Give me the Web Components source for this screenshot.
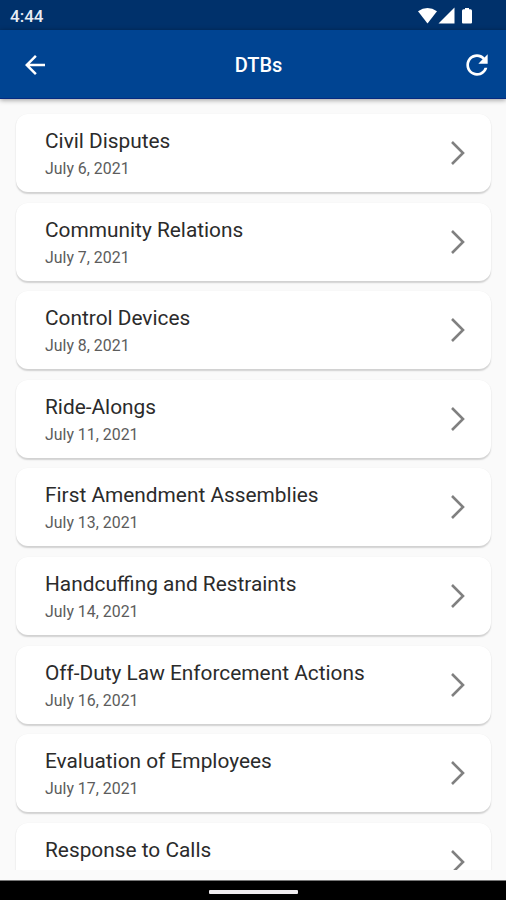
<!DOCTYPE html>
<html lang="en">
<head>
<meta charset="utf-8">
<title>DTBs</title>
<style>
    html, body {
        margin: 0;
        height: 100%;
        overflow: hidden;
        background: #fafafa;
    }
    body {
        font-family: Roboto, sans-serif;
    }
</style>
</head>
<body>
<phone-screen>
    <status-bar slot="top">4:44</status-bar>
    <app-bar slot="top">DTBs</app-bar>
    <bulletin-card date="July 6, 2021">Civil Disputes</bulletin-card>
    <bulletin-card date="July 7, 2021">Community Relations</bulletin-card>
    <bulletin-card date="July 8, 2021">Control Devices</bulletin-card>
    <bulletin-card date="July 11, 2021">Ride-Alongs</bulletin-card>
    <bulletin-card date="July 13, 2021">First Amendment Assemblies</bulletin-card>
    <bulletin-card date="July 14, 2021">Handcuffing and Restraints</bulletin-card>
    <bulletin-card date="July 16, 2021">Off-Duty Law Enforcement Actions</bulletin-card>
    <bulletin-card date="July 17, 2021">Evaluation of Employees</bulletin-card>
    <bulletin-card>Response to Calls</bulletin-card>
    <nav-bar slot="bottom"></nav-bar>
</phone-screen>
<script>
class PhoneScreen extends HTMLElement {
    constructor(){
        super();
        this.attachShadow({mode:"open"}).innerHTML = `
            <style>
                :host {
                    display: flex;
                    flex-direction: column;
                    width: 506px;
                    height: 900px;
                    overflow: hidden;
                    background: #fafafa;
                }
                #list {
                    flex: 1;
                    min-height: 0;
                    overflow: hidden;
                    display: flex;
                    flex-direction: column;
                    gap: 10.6px;
                    padding: 15px 15px 0 16px;
                    margin-bottom: 10px;
                }
            </style>
            <slot name="top"></slot>
            <div id="list"><slot></slot></div>
            <slot name="bottom"></slot>
        `;
    }
}
window.customElements.define("phone-screen",PhoneScreen);

class StatusBar extends HTMLElement {
    constructor(){
        super();
        this.attachShadow({mode:"open"}).innerHTML = `
            <style>
                :host {
                    display: flex;
                    align-items: center;
                    justify-content: space-between;
                    flex: none;
                    box-sizing: border-box;
                    height: 30px;
                    padding: 1px 30px 0 10px;
                    background: #00316b;
                    color: #e8edf5;
                    font-size: 17px;
                    font-weight: 500;
                }
                svg {
                    display: block;
                    fill: #fff;
                }
            </style>
            <slot></slot>
            <svg width="58" height="18" viewBox="0 0 58 18">
                <path d="M0 4.2Q9.500 -2.200 19 4.200L9.500 16.500Z"/>
                <path d="M36.500 0.500V16.500H20.500Z"/>
                <path d="M47 1H51V2.200H52.500Q54 2.200 54 3.700V15.500Q54 16.500 53 16.500H45Q44 16.500 44 15.500V3.700Q44 2.200 45.500 2.200H47Z"/>
            </svg>
        `;
    }
}
window.customElements.define("status-bar",StatusBar);

class AppBar extends HTMLElement {
    constructor(){
        super();
        this.attachShadow({mode:"open"}).innerHTML = `
            <style>
                :host {
                    display: grid;
                    grid-template-columns: 32px auto 32px;
                    align-items: center;
                    justify-content: space-between;
                    flex: none;
                    box-sizing: border-box;
                    height: 69px;
                    padding: 1px 13px 0 20px;
                    background: #004492;
                    border-bottom: 1px solid #062a80;
                    box-shadow: 0 1px 5px rgba(0,0,0,.4);
                    color: #fff;
                    font-size: 20px;
                    font-weight: 500;
                    z-index: 1;
                }
                #title {
                    padding-left: 4px;
                }
                svg {
                    display: block;
                    fill: #fff;
                }
            </style>
            <svg width="30" height="30" viewBox="0 0 24 24"><path d="M20 11H7.830l5.590-5.590L12 4l-8 8 8 8 1.410-1.410L7.830 13H20v-2z"/></svg>
            <div id="title"><slot></slot></div>
            <svg width="32" height="32" viewBox="0 0 24 24"><path d="M17.650 6.350C16.200 4.900 14.210 4 12 4c-4.420 0-7.990 3.580-7.990 8s3.570 8 7.990 8c3.730 0 6.840-2.550 7.730-6h-2.080c-.820 2.330-3.040 4-5.650 4-3.310 0-6-2.690-6-6s2.690-6 6-6c1.660 0 3.140.690 4.220 1.780L13 11h7V4l-2.350 2.350z"/></svg>
        `;
    }
}
window.customElements.define("app-bar",AppBar);

class BulletinCard extends HTMLElement {
    constructor(){
        super();
        this.attachShadow({mode:"open"}).innerHTML = `
            <style>
                :host {
                    display: flex;
                    align-items: center;
                    justify-content: space-between;
                    flex: none;
                    box-sizing: border-box;
                    height: 78px;
                    padding: 0 25px 0 29px;
                    border-radius: 12px;
                    background: #fff;
                    box-shadow: 0 1.500px 1.500px rgba(0,0,0,.16), 0 0 2px rgba(0,0,0,.02);
                }
                #text {
                    padding-top: 3px;
                }
                #title {
                    height: 28px;
                    line-height: 28px;
                    font-size: 20.850px;
                    color: #2b2b2b;
                }
                #date {
                    height: 27px;
                    line-height: 27px;
                    font-size: 15.900px;
                    color: #5c5c5c;
                }
                svg {
                    display: block;
                    fill: none;
                    stroke: #808080;
                    stroke-width: 2.600;
                }
            </style>
            <div id="text">
                <div id="title"><slot></slot></div>
                <div id="date"></div>
            </div>
            <svg width="16" height="26" viewBox="0 0 16 26"><path d="M2 2L13 13L2 24"/></svg>
        `;
    }
    connectedCallback(){
        this.shadowRoot.getElementById("date").textContent = this.getAttribute("date")||"";
    }
}
window.customElements.define("bulletin-card",BulletinCard);

class NavBar extends HTMLElement {
    constructor(){
        super();
        this.attachShadow({mode:"open"}).innerHTML = `
            <style>
                :host {
                    display: flex;
                    align-items: center;
                    justify-content: center;
                    flex: none;
                    box-sizing: border-box;
                    height: 20px;
                    padding-top: 2px;
                    background: #000;
                    border-top: 1px solid #777;
                }
                div {
                    width: 89px;
                    height: 4px;
                    border-radius: 1px;
                    background: #f0edf0;
                }
            </style>
            <div></div>
        `;
    }
}
window.customElements.define("nav-bar",NavBar);
</script>
</body>
</html>
